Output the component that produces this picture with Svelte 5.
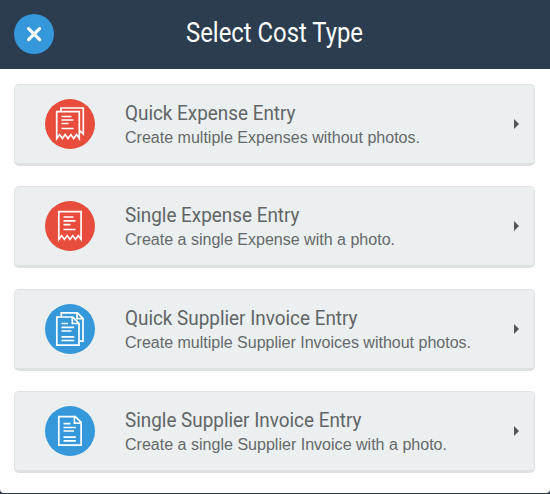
<script>
  const items = [
    { title: 'Quick Expense Entry', width: 170.5, sub: 'Create multiple Expenses without photos.', subWidth: 295, kind: 'receipt', many: true },
    { title: 'Single Expense Entry', width: 174.5, sub: 'Create a single Expense with a photo.', subWidth: 270, kind: 'receipt', many: false },
    { title: 'Quick Supplier Invoice Entry', width: 232.5, sub: 'Create multiple Supplier Invoices without photos.', subWidth: 346, kind: 'invoice', many: true },
    { title: 'Single Supplier Invoice Entry', width: 236.5, sub: 'Create a single Supplier Invoice with a photo.', subWidth: 322, kind: 'invoice', many: false }
  ];
</script>

<div class="dialog">
  <header>
    <button class="close" aria-label="Close">
      <svg width="40" height="40" viewBox="0 0 40 40"><path d="M14.6 14.6l11 11M25.6 14.6l-11 11" stroke="#fff" stroke-width="3.2" stroke-linecap="round" /></svg>
    </button>
    <svg class="heading" width="180" height="40"><text x="1" y="28.5" textLength="177" lengthAdjust="spacingAndGlyphs">Select Cost Type</text></svg>
  </header>
  <main>
    {#each items as item}
      <div class="card">
        <svg class="icon" width="50" height="50" viewBox="0 0 50 50" fill="none" stroke="#fff" stroke-width="1.7">
          <circle cx="25" cy="25" r="25" stroke="none" fill={item.kind === 'receipt' ? '#e74c3c' : '#3498db'} />
          {#if item.kind === 'receipt' && item.many}
            <path d="M16 12.5V9h22.3v26l-3.3-3.2" />
            <path d="M11.7 39.6V12.7h22.6v26.9l-2.8-4-2.8 4-2.8-4-2.9 4-2.8-4-2.8 4-2.8-4z" />
            <path d="M16.5 17.5h10M16.5 21h12M16.5 24.5h7M16.5 29.5h12" />
          {:else if item.kind === 'receipt'}
            <path d="M13.8 38.4V10.7h22.3v27.7l-2.8-3.8-2.8 3.8-2.7-3.8-2.8 3.8-2.8-3.8-2.8 3.8-2.8-3.8z" />
            <path d="M18.5 16h10M18.5 19.8h12M18.5 23.6h7M18.5 28.5h12" />
          {:else if item.many}
            <path d="M16.3 12.5V8.8h16.2l5.5 5.5v22.9h-3.5M32 9v5.6h5.6" />
            <path d="M11.8 13h15.9l6.3 6.3v21.9H11.8zM27.3 13.3v6.2h6.2" />
            <path d="M16.5 19.5h6.5M16.5 23.3h12.7M16.5 27h10M16.5 32.8h12.7M16.5 36.5h12.7" />
          {:else}
            <path d="M13.8 10.6h16.6l5.7 5.7v22.9H13.8zM29.4 11v6.2h6.2" />
            <path d="M18.5 17.7h7M18.5 21.5h12.3M18.5 25h10.5M18.5 31.1h12.3M18.5 34.8h12.3" />
          {/if}
        </svg>
        <div class="copy">
          <svg class="title" width="260" height="27"><text x="0" y="21" textLength={item.width} lengthAdjust="spacingAndGlyphs">{item.title}</text></svg>
          <svg class="sub" width="360" height="23"><text x="0" y="17" textLength={item.subWidth} lengthAdjust="spacingAndGlyphs">{item.sub}</text></svg>
        </div>
        <svg class="arrow" width="5" height="10"><path d="M0 0l5 5-5 5z" fill="#535758" /></svg>
      </div>
    {/each}
  </main>
</div>

<style>
  :global(body) { background: #2d3d50; }
  .dialog { box-sizing: border-box; height: 493px; background: #fff; border-radius: 0 0 4px 4px; overflow: hidden; }
  header { position: relative; height: 69px; background: #2d3d50; display: flex; align-items: center; justify-content: center; box-sizing: border-box; padding-bottom: 3px; }
  .close { position: absolute; left: 14px; top: 14px; width: 40px; height: 40px; padding: 0; border: 0; border-radius: 50%; background: #3498db; }
  .close svg { display: block; }
  .heading { display: block; overflow: visible; fill: #fff; font: 27.5px Roboto, "Open Sans", sans-serif; }
  main { display: flex; flex-direction: column; gap: 20.4px; padding: 15px 15px 0 14px; }
  .card { box-sizing: border-box; flex: none; height: 82px; display: flex; align-items: flex-start; background: #ebeff0; border: 1px solid #dfe2e2; border-bottom: 3px solid #dee1e1; border-radius: 5px; padding: 14px 14px 0 30px; }
  .icon { flex: none; display: block; }
  .copy { flex: 1; min-width: 0; padding-left: 30px; }
  .copy svg { display: block; overflow: visible; }
  .title { fill: #626566; font: 20.5px Roboto, "Open Sans", sans-serif; }
  .sub { fill: #66696a; font: 16px "Liberation Sans", Arial, sans-serif; }
  .arrow { flex: none; display: block; margin-top: 20px; margin-right: 1px; }
</style>
